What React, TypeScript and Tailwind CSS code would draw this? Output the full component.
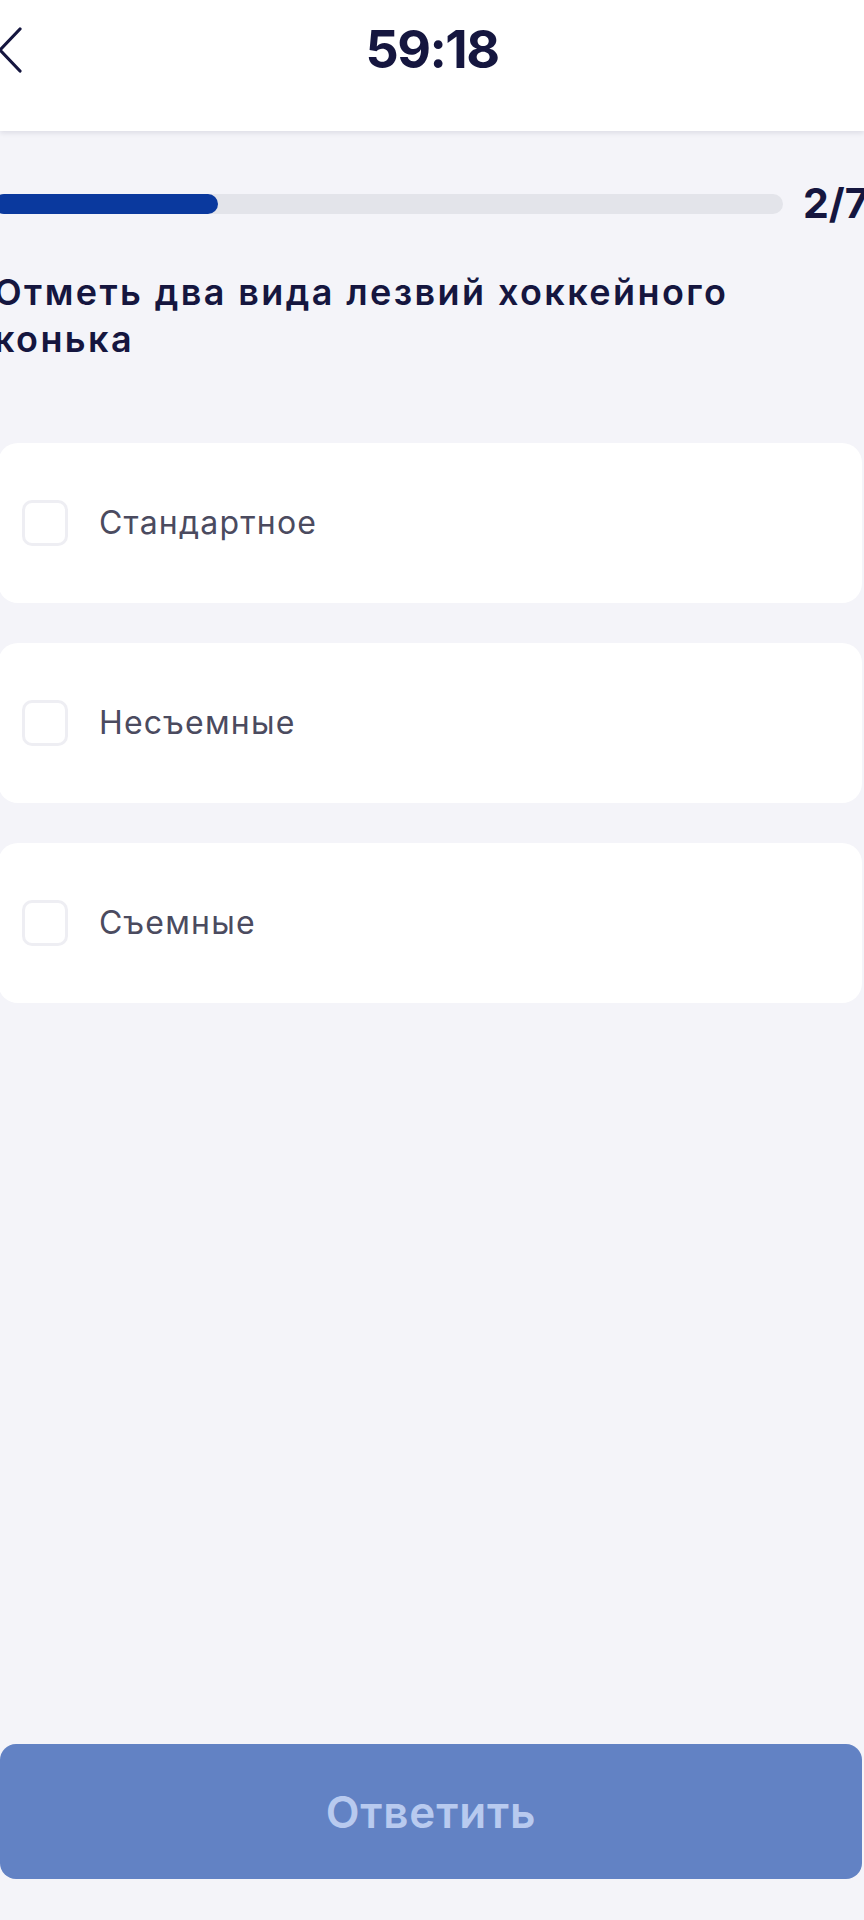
import React from "react";

const options = ["Стандартное", "Несъемные", "Съемные"];

export default function App() {
  return (
    <div
      className="min-h-[1920px] w-[864px] overflow-hidden bg-[#f4f4f9] flex flex-col"
      style={{ fontFamily: "Inter, 'Noto Sans', sans-serif" }}
    >
      <header className="relative z-10 h-[131px] shrink-0 bg-white shadow-[0_2px_5px_rgba(20,20,60,0.10)]">
        <div className="grid h-[100px] grid-cols-[1fr_auto_1fr] items-center">
          <div className="flex items-center">
            <svg width="24" height="46" viewBox="0 0 24 46" fill="none" className="-ml-[2px]">
              <path
                d="M22 2 L2 23 L22 44"
                stroke="#15163f"
                strokeWidth="3.2"
                strokeLinecap="round"
                strokeLinejoin="round"
              />
            </svg>
          </div>
          <div className="text-[52px] font-bold leading-none tracking-[-1.5px] text-[#15163f]">59:18</div>
          <div />
        </div>
      </header>

      <div className="-ml-[6px] mt-[52px] flex h-[41px] items-center">
        <div className="h-[20px] w-[789px] shrink-0 rounded-full bg-[#e3e4ea]">
          <div className="h-[20px] w-[224px] rounded-full bg-[#0a399e]" />
        </div>
        <div className="ml-[20px] shrink-0 whitespace-nowrap text-[41px] font-bold leading-none text-[#15163f]">
          2/7
        </div>
      </div>

      <h1 className="-ml-[6px] mt-[45px] w-[820px] text-[36px] font-semibold leading-[47px] tracking-[2.4px] text-[#15163f]">
        Отметь два вида лезвий хоккейного конька
      </h1>

      <div className="mt-[80px] flex flex-col gap-[40px]">
        {options.map((o) => (
          <div
            key={o}
            className="-ml-[2px] flex h-[160px] w-[864px] items-center rounded-[20px] bg-white"
          >
            <div className="ml-[24px] h-[46px] w-[46px] shrink-0 rounded-[10px] border-[3px] border-[#eeeef3] bg-white" />
            <span className="ml-[31px] text-[32px] font-normal leading-none tracking-[1.2px] text-[#4b4b5f]">
              {o}
            </span>
          </div>
        ))}
      </div>

      <div className="mt-auto pb-[41px]">
        <button className="flex h-[135px] w-[862px] items-center justify-center rounded-[16px] bg-[#6282c4]">
          <span className="text-[44px] font-semibold leading-none tracking-[0.8px] text-[#b8caef]">Ответить</span>
        </button>
      </div>
    </div>
  );
}
